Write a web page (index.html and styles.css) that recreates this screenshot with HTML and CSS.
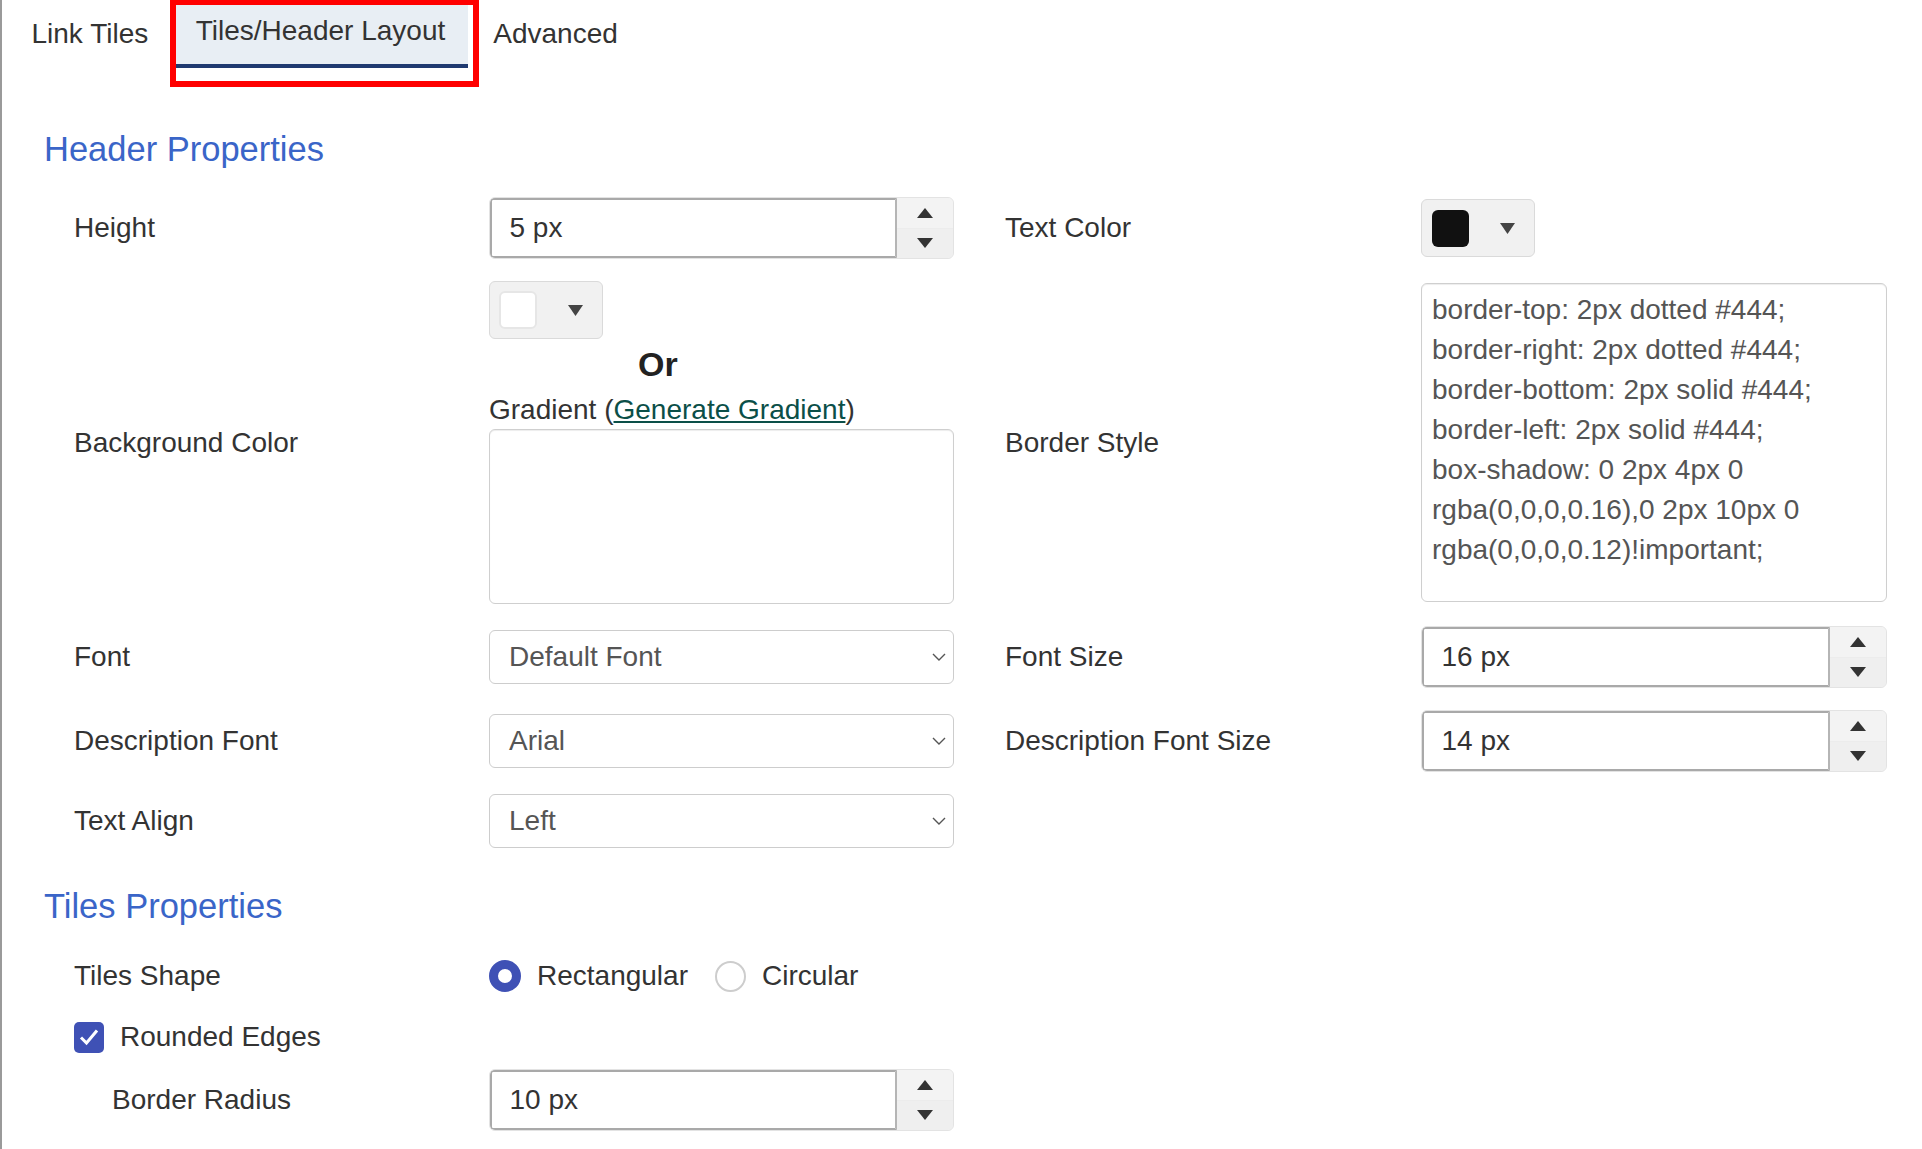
FILE: index.html
```html
<!DOCTYPE html>
<html lang="en">
<head>
<meta charset="utf-8">
<title>Tiles/Header Layout</title>
<link rel="stylesheet" href="styles.css">
</head>
<body>
<div class="page">
  <nav class="tabs">
    <div class="tab">Link Tiles</div>
    <div class="tab active">Tiles/Header Layout</div>
    <div class="tab">Advanced</div>
    <div class="highlight"></div>
  </nav>

  <section class="section">
    <h2 class="heading heading-first">Header Properties</h2>
    <div class="form-grid header-grid">
      <div class="label">Height</div>
      <div class="control">
        <div class="number">
          <div class="number-input">5 px</div>
          <div class="spinner">
            <span class="spin"><svg width="16" height="10" viewBox="0 0 16 10"><path d="M8 0L16 10H0z" fill="#333"/></svg></span>
            <span class="spin spin-down"><svg width="16" height="10" viewBox="0 0 16 10"><path d="M0 0H16L8 10z" fill="#333"/></svg></span>
          </div>
        </div>
      </div>
      <div class="label right">Text Color</div>
      <div class="control">
        <div class="picker"><span class="swatch swatch-black"></span><svg class="caret" width="15" height="11" viewBox="0 0 15 11"><path d="M0 0H15L7.5 11z" fill="#444"/></svg></div>
      </div>

      <div class="label">Background Color</div>
      <div class="control bg-control">
        <div class="picker"><span class="swatch swatch-white"></span><svg class="caret" width="15" height="11" viewBox="0 0 15 11"><path d="M0 0H15L7.5 11z" fill="#444"/></svg></div>
        <div class="or">Or</div>
        <div class="gradient-label">Gradient (<a class="link" href="#">Generate Gradient</a>)</div>
        <div class="textarea gradient-area"></div>
      </div>
      <div class="label right">Border Style</div>
      <div class="control">
        <div class="textarea border-area">border-top: 2px dotted #444;
border-right: 2px dotted #444;
border-bottom: 2px solid #444;
border-left: 2px solid #444;
box-shadow: 0 2px 4px 0
rgba(0,0,0,0.16),0 2px 10px 0
rgba(0,0,0,0.12)!important;</div>
      </div>

      <div class="label">Font</div>
      <div class="control">
        <div class="select"><span>Default Font</span><svg width="14" height="8" viewBox="0 0 14 8"><path d="M1 1L7 7L13 1" fill="none" stroke="#555" stroke-width="1.4"/></svg></div>
      </div>
      <div class="label right">Font Size</div>
      <div class="control">
        <div class="number">
          <div class="number-input">16 px</div>
          <div class="spinner">
            <span class="spin"><svg width="16" height="10" viewBox="0 0 16 10"><path d="M8 0L16 10H0z" fill="#333"/></svg></span>
            <span class="spin spin-down"><svg width="16" height="10" viewBox="0 0 16 10"><path d="M0 0H16L8 10z" fill="#333"/></svg></span>
          </div>
        </div>
      </div>

      <div class="label">Description Font</div>
      <div class="control">
        <div class="select"><span>Arial</span><svg width="14" height="8" viewBox="0 0 14 8"><path d="M1 1L7 7L13 1" fill="none" stroke="#555" stroke-width="1.4"/></svg></div>
      </div>
      <div class="label right">Description Font Size</div>
      <div class="control">
        <div class="number">
          <div class="number-input">14 px</div>
          <div class="spinner">
            <span class="spin"><svg width="16" height="10" viewBox="0 0 16 10"><path d="M8 0L16 10H0z" fill="#333"/></svg></span>
            <span class="spin spin-down"><svg width="16" height="10" viewBox="0 0 16 10"><path d="M0 0H16L8 10z" fill="#333"/></svg></span>
          </div>
        </div>
      </div>

      <div class="label">Text Align</div>
      <div class="control">
        <div class="select"><span>Left</span><svg width="14" height="8" viewBox="0 0 14 8"><path d="M1 1L7 7L13 1" fill="none" stroke="#555" stroke-width="1.4"/></svg></div>
      </div>
    </div>

    <h2 class="heading heading-second">Tiles Properties</h2>
    <div class="form-grid tiles-grid">
      <div class="label shape-label">Tiles Shape</div>
      <div class="control radios">
        <label class="radio-opt"><span class="radio checked"></span>Rectangular</label>
        <label class="radio-opt"><span class="radio"></span>Circular</label>
      </div>

      <div class="label check-row"><span class="checkbox"><svg width="22" height="20" viewBox="0 0 22 20"><path d="M3 10.5L8.5 16L19 3.5" fill="none" stroke="#fff" stroke-width="3"/></svg></span>Rounded Edges</div>

      <div class="label indent">Border Radius</div>
      <div class="control radius-control">
        <div class="number">
          <div class="number-input">10 px</div>
          <div class="spinner">
            <span class="spin"><svg width="16" height="10" viewBox="0 0 16 10"><path d="M8 0L16 10H0z" fill="#333"/></svg></span>
            <span class="spin spin-down"><svg width="16" height="10" viewBox="0 0 16 10"><path d="M0 0H16L8 10z" fill="#333"/></svg></span>
          </div>
        </div>
      </div>
    </div>
  </section>
</div>
</body>
</html>
```

FILE: styles.css
```css
* { box-sizing: border-box; }

html, body {
  margin: 0;
  padding: 0;
  background: #fff;
}

body {
  font-family: "Liberation Sans", Arial, sans-serif;
  font-size: 28px;
  line-height: 40px;
  color: #333;
  overflow: hidden;
}

.page {
  border-left: 2px solid #9a9a9a;
  min-height: 1149px;
  width: 1922px;
}

/* Tabs */
.tabs {
  position: relative;
  display: flex;
  gap: 4px;
  padding-left: 8.5px;
  height: 68px;
}

.tab {
  padding: 14px 21px 14px;
  line-height: 40px;
  color: #333;
  white-space: nowrap;
}

.tab.active {
  padding: 11px 23px 13px 22.5px;
  background: #e8eef4;
  border-bottom: 4px solid #1f3a70;
}

.highlight {
  position: absolute;
  left: 168px;
  top: -1px;
  width: 309px;
  height: 88px;
  border: 6px solid #ff0000;
  pointer-events: none;
}

/* Sections */
.section {
  padding-left: 42px;
}

.heading {
  margin: 0;
  font-size: 34.5px;
  line-height: 40px;
  font-weight: normal;
  color: #3a65c8;
}

.heading-first { margin-top: 61px; }
.heading-second { margin-top: 38px; }

.form-grid {
  display: grid;
  grid-template-columns: 415px 465px 467px 466px;
  row-gap: 22px;
  align-items: center;
  margin-left: 30px;
}

.header-grid { margin-top: 28px; }

.label {
  color: #333;
  white-space: nowrap;
}

.label.right { padding-left: 51px; }
.label.indent { padding-left: 38px; }

/* Number input with spinner */
.number {
  display: flex;
  height: 62px;
  border: 1px solid #e3e3e3;
  border-radius: 6px;
  background: #f2f2f2;
  overflow: hidden;
}

.number-input {
  flex: 1;
  display: flex;
  align-items: center;
  padding-left: 17.5px;
  background: #fff;
  border: 2px solid #a9a9a9;
  border-right-color: #b5b5b5;
  border-radius: 3px 0 0 3px;
  color: #333;
}

.spinner {
  width: 56px;
  display: flex;
  flex-direction: column;
}

.spin {
  flex: 1;
  display: flex;
  align-items: center;
  justify-content: center;
  background: #f3f3f3;
}

.spin-down {
  background: #efefef;
  border-top: 1px solid #ececec;
}

/* Color pickers */
.picker {
  position: relative;
  width: 114px;
  height: 58px;
  border: 1px solid #dadada;
  border-radius: 6px;
  background: #f1f1f1;
  display: flex;
  align-items: center;
  padding-left: 9px;
}

.swatch {
  width: 38px;
  height: 38px;
  border-radius: 6px;
}

.swatch-black { background: #111; width: 37px; height: 37px; margin-left: 1px; }
.swatch-white { background: #fff; border: 2px solid #e6e6e6; }

.caret {
  margin-left: 31px;
}

/* Background color column */
.bg-control {
  display: flex;
  flex-direction: column;
}

.or {
  margin-top: 3px;
  margin-left: 149px;
  font-size: 34px;
  font-weight: bold;
  line-height: 44px;
  color: #222;
}

.gradient-label {
  margin-top: 4px;
  line-height: 39px;
  color: #333;
}

.link {
  color: #0b4f48;
  text-decoration: underline;
}

.textarea {
  border: 1px solid #cfcfcf;
  border-radius: 6px;
  background: #fff;
  box-shadow: inset 0 1px 1px rgba(0, 0, 0, 0.075);
}

.gradient-area {
  height: 175px;
}

.border-area {
  height: 319px;
  padding: 6px 10px;
  color: #555;
  white-space: pre-line;
}

/* Select */
.select {
  height: 54px;
  border: 1px solid #cdcdcd;
  border-radius: 6px;
  display: flex;
  align-items: center;
  justify-content: space-between;
  padding: 0 7px 0 19px;
  color: #555;
  background: #fff;
}

/* Tiles section */
.tiles-grid {
  row-gap: 0;
  margin-top: 30px;
}

.shape-label,
.radios {
  height: 40px;
  display: flex;
  align-items: center;
}

.radio-opt {
  display: flex;
  align-items: center;
  margin-right: 27px;
  color: #333;
}

.radio {
  width: 32px;
  height: 32px;
  border-radius: 50%;
  border: 2px solid #cdcdcd;
  background: #fff;
  margin-right: 16px;
}

.radio.checked {
  border: 9px solid #3f51b5;
}

.radio-opt + .radio-opt .radio {
  width: 31px;
  height: 31px;
}

.check-row {
  grid-column: 1 / -1;
  display: flex;
  align-items: center;
  height: 40px;
  margin-top: 21px;
}

.checkbox {
  width: 30px;
  height: 31px;
  border-radius: 5px;
  background: #3f51b5;
  display: flex;
  align-items: center;
  justify-content: center;
  margin-right: 16px;
}

.label.indent,
.radius-control {
  margin-top: 12px;
}
```
